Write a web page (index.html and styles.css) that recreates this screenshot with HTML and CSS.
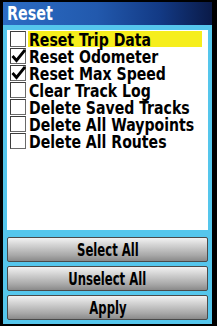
FILE: index.html
```html
<!DOCTYPE html>
<html>
<head>
<meta charset="utf-8">
<link rel="stylesheet" href="styles.css">
</head>
<body>
<div class="screen">
  <div class="titlebar"><span class="ttext">Reset</span></div>
  <div class="frame">
    <div class="list">
      <div class="row selected">
        <span class="box"></span><span class="label"><span class="ltext">Reset Trip Data</span></span>
      </div>
      <div class="row">
        <span class="box"><svg viewBox="0 0 16 16" width="16" height="16"><polyline points="2.5,8 6.5,12.5 15,2" fill="none" stroke="#000" stroke-width="2.8"/></svg></span><span class="label"><span class="ltext">Reset Odometer</span></span>
      </div>
      <div class="row">
        <span class="box"><svg viewBox="0 0 16 16" width="16" height="16"><polyline points="2.5,8 6.5,12.5 15,2" fill="none" stroke="#000" stroke-width="2.8"/></svg></span><span class="label"><span class="ltext">Reset Max Speed</span></span>
      </div>
      <div class="row">
        <span class="box"></span><span class="label"><span class="ltext">Clear Track Log</span></span>
      </div>
      <div class="row">
        <span class="box"></span><span class="label"><span class="ltext">Delete Saved Tracks</span></span>
      </div>
      <div class="row">
        <span class="box"></span><span class="label"><span class="ltext">Delete All Waypoints</span></span>
      </div>
      <div class="row">
        <span class="box"></span><span class="label"><span class="ltext">Delete All Routes</span></span>
      </div>
    </div>
    <div class="buttons">
      <div class="btn"><span class="btext">Select All</span></div>
      <div class="btn"><span class="btext">Unselect All</span></div>
      <div class="btn"><span class="btext">Apply</span></div>
    </div>
  </div>
</div>
</body>
</html>
```
FILE: styles.css
```css
html, body {
  margin: 0;
  padding: 0;
  background: #000;
}
.screen {
  width: 217px;
  height: 326px;
  box-sizing: border-box;
  padding: 2px 5px 2px 3px;
  background: #000;
  display: flex;
  flex-direction: column;
  font-family: "DejaVu Sans Condensed", "DejaVu Sans", sans-serif;
  font-weight: bold;
}
.titlebar {
  height: 23px;
  flex: none;
  background: linear-gradient(to right, #2c6dc4 0%, #2259ad 45%, #133a85 75%, #0a1a48 100%);
  color: #fff;
  padding-left: 4px;
  overflow: hidden;
}
.ttext {
  display: inline-block;
  font-size: 19px;
  line-height: 22px;
  transform: scaleX(0.84);
  transform-origin: left center;
}
.frame {
  flex: 1;
  background: #55c6ec;
  padding: 5px 4px 4px 4px;
  display: flex;
  flex-direction: column;
}
.list {
  height: 200px;
  flex: none;
  background: #fff;
  padding: 1px 6px 0 3px;
  box-sizing: border-box;
  display: flex;
  flex-direction: column;
  gap: 1px;
}
.row {
  display: flex;
  height: 16px;
  align-items: stretch;
}
.box {
  width: 16px;
  height: 16px;
  box-sizing: border-box;
  border: 1.5px solid #3c3c3c;
  border-right-color: #6a6a6a;
  border-bottom-color: #6a6a6a;
  background: #fff;
  position: relative;
  flex: none;
}
.box svg {
  position: absolute;
  left: -1.5px;
  top: -1.5px;
}
.label {
  flex: 1;
  margin-left: 2px;
  padding-left: 1px;
  height: 16px;
  overflow: visible;
  color: #000;
  white-space: nowrap;
}
.ltext {
  display: inline-block;
  font-size: 18px;
  line-height: 16px;
  transform: scaleX(0.87);
  transform-origin: left center;
}
.selected .label {
  background: #f6ee1c;
}
.buttons {
  margin-top: 7px;
  display: flex;
  flex-direction: column;
  gap: 4px;
}
.btn {
  height: 25px;
  box-sizing: border-box;
  border: 1px solid #4a4a4a;
  border-radius: 2px;
  background: linear-gradient(to bottom, #f2f2f2 0%, #d4d4d4 30%, #a8a8a8 75%, #8a8a8a 100%);
  display: flex;
  justify-content: center;
  align-items: center;
  color: #000;
}
.btext {
  display: inline-block;
  font-size: 18px;
  line-height: 23px;
  transform: scaleX(0.72);
}
```
